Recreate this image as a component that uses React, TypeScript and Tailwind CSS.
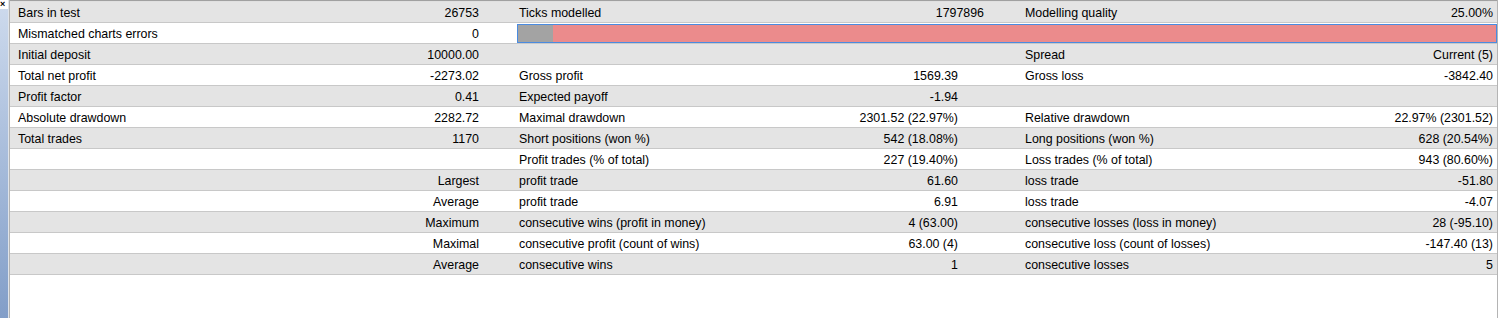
import React from "react";

type Row = {
  c: [string, string, string, string, string, string];
  bar?: boolean;
  c4pr?: string;
};

const rows: Row[] = [
  { c: ["Bars in test", "26753", "Ticks modelled", "1797896", "Modelling quality", "25.00%"], c4pr: "pr-[36px]" },
  { c: ["Mismatched charts errors", "0", "", "", "", ""], bar: true },
  { c: ["Initial deposit", "10000.00", "", "", "Spread", "Current (5)"] },
  { c: ["Total net profit", "-2273.02", "Gross profit", "1569.39", "Gross loss", "-3842.40"] },
  { c: ["Profit factor", "0.41", "Expected payoff", "-1.94", "", ""] },
  { c: ["Absolute drawdown", "2282.72", "Maximal drawdown", "2301.52 (22.97%)", "Relative drawdown", "22.97% (2301.52)"] },
  { c: ["Total trades", "1170", "Short positions (won %)", "542 (18.08%)", "Long positions (won %)", "628 (20.54%)"] },
  { c: ["", "", "Profit trades (% of total)", "227 (19.40%)", "Loss trades (% of total)", "943 (80.60%)"] },
  { c: ["", "Largest", "profit trade", "61.60", "loss trade", "-51.80"] },
  { c: ["", "Average", "profit trade", "6.91", "loss trade", "-4.07"] },
  { c: ["", "Maximum", "consecutive wins (profit in money)", "4 (63.00)", "consecutive losses (loss in money)", "28 (-95.10)"] },
  { c: ["", "Maximal", "consecutive profit (count of wins)", "63.00 (4)", "consecutive loss (count of losses)", "-147.40 (13)"] },
  { c: ["", "Average", "consecutive wins", "1", "consecutive losses", "5"] },
];

export default function App() {
  return (
    <div
      className="flex w-[1500px] h-[318px] bg-white text-black overflow-hidden"
      style={{ fontFamily: '"Liberation Sans", Arial, sans-serif' }}
    >
      {/* left docked strip */}
      <div className="flex flex-col w-[8px] shrink-0">
        <div className="h-[9px] bg-white flex items-start justify-start">
          <span className="text-[9px] font-bold leading-[8px]">×</span>
        </div>
        <div className="flex-1 bg-gradient-to-b from-[#ccd9ec] to-[#829ec8]" />
      </div>
      <div className="w-[1px] shrink-0 bg-[#dfe4ea]" />
      {/* table */}
      <div className="w-[1488px] shrink-0 flex flex-col border-l border-[#b4b4b4]">
        <div className="h-[2px] border-t border-[#a0a0a0] bg-[#e0e0e0]" />
        {rows.map((r, i) => {
          const gray = i % 2 === 0;
          return (
            <div
              key={i}
              className={`flex h-[21px] border-b border-[#c8c8c8] text-[12.4px] leading-[20px] ${gray ? "bg-[#e4e4e4]" : "bg-white"}`}
            >
              <div className="w-[240px] shrink-0 pl-[8px] pt-[1px] whitespace-nowrap">{r.c[0]}</div>
              <div className="w-[264px] shrink-0 pr-[35px] pt-[1px] text-right whitespace-nowrap">{r.c[1]}</div>
              {r.bar ? (
                <div className="flex-1 flex items-start pl-[3px] pt-[1px]">
                  <div className="flex w-full h-[19px] border border-[#4a8be0]">
                    <div className="w-[35px] bg-[#a3a3a3]" />
                    <div className="flex-1 bg-[#eb8b8c]" />
                  </div>
                </div>
              ) : (
                <>
                  <div className="w-[246px] shrink-0 pl-[5px] pt-[1px] whitespace-nowrap">{r.c[2]}</div>
                  <div className={`w-[260px] shrink-0 pt-[1px] text-right whitespace-nowrap ${r.c4pr ?? "pr-[62px]"}`}>{r.c[3]}</div>
                  <div className="w-[240px] shrink-0 pl-[5px] pt-[1px] whitespace-nowrap">{r.c[4]}</div>
                  <div className="flex-1 pr-[4px] pt-[1px] text-right whitespace-nowrap">{r.c[5]}</div>
                </>
              )}
            </div>
          );
        })}
      </div>
      <div className="w-[1px] shrink-0 bg-[#b4b4b4]" />
      <div className="flex-1 bg-white" />
    </div>
  );
}
